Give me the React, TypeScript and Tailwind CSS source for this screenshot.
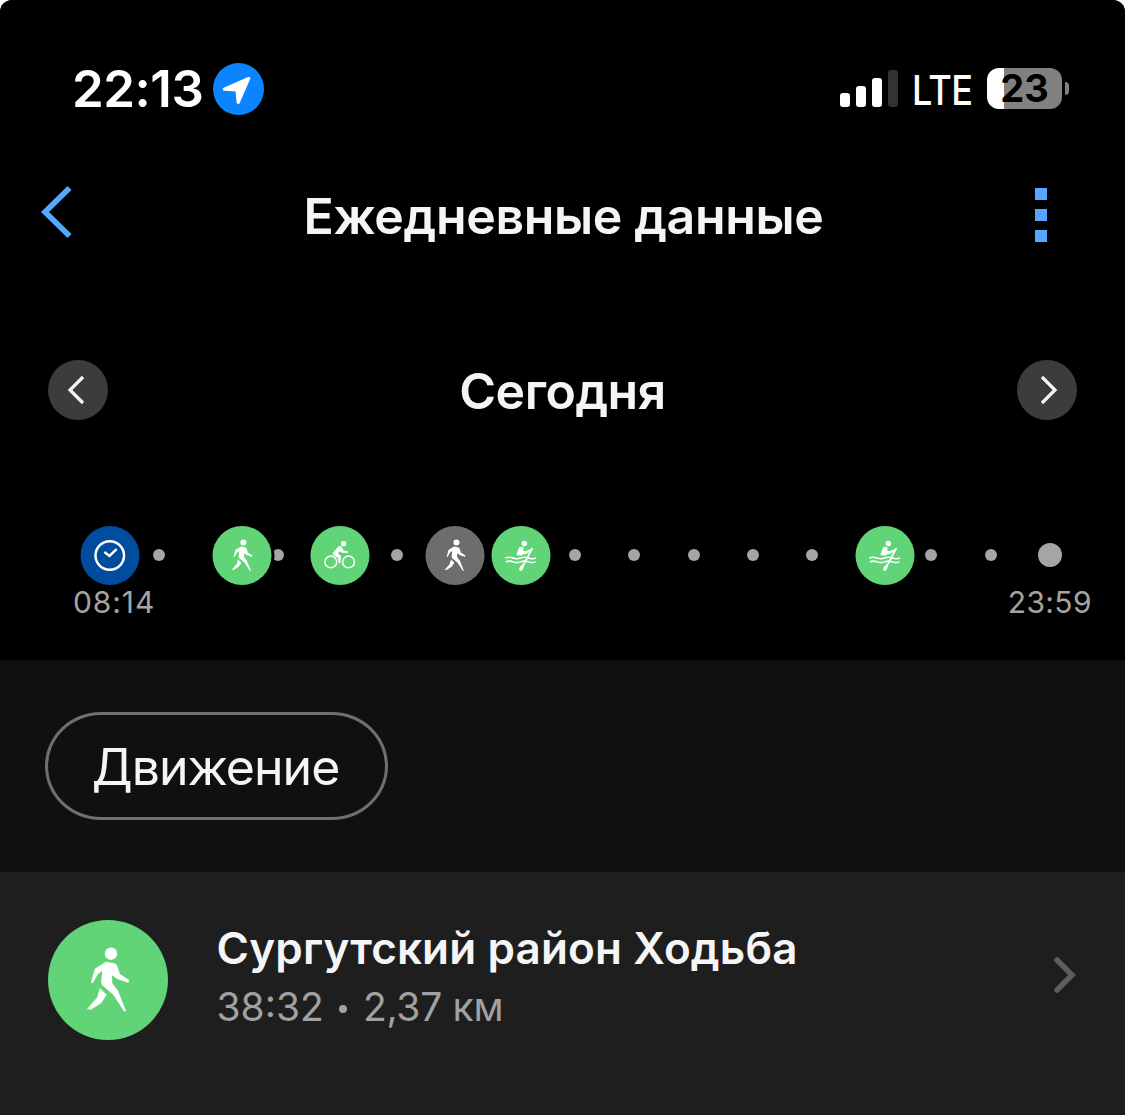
import type { ReactNode } from "react";

type Kind = "sync" | "walk" | "bike" | "row";

const DAY_LABELS = { start: "08:14", end: "23:59" };

// pos is the share of the track that has passed, in percent
const events: { kind: Kind; pos: number; bg: string }[] = [
  { kind: "sync", pos: 1.06, bg: "bg-[#004c9f]" },
  { kind: "walk", pos: 14.94, bg: "bg-[#62d478]" },
  { kind: "bike", pos: 25.34, bg: "bg-[#62d478]" },
  { kind: "walk", pos: 37.44, bg: "bg-[#6d6d6d]" },
  { kind: "row", pos: 44.38, bg: "bg-[#62d478]" },
  { kind: "row", pos: 82.59, bg: "bg-[#62d478]" },
];

const glyphs: Record<Kind, ReactNode> = {
  sync: (
    <g fill="none" stroke="currentColor" strokeWidth="5">
      <circle cx="59.500" cy="60" r="29" />
      <path d="M48.500 53l10.500 8L73.500 47" />
    </g>
  ),
  walk: (
    <g fill="currentColor">
      <circle cx="63" cy="33.700" r="6.200" />
      <path d="M58 41.700L67 43.500Q68.500 44 69 45.500L72 54L81 60Q81.300 62 80 62.700L69.300 59L64 55.300L64.300 63.300L70.300 71.300L78 91L76.300 91.700L65.300 74.700L54.500 65.500Q53 64.500 53.200 62L54.300 50.700L50 54L45 62.700Q43.300 63.300 43 62.300L46.500 50Q46.700 48.700 48 48Z" />
      <path d="M51.700 68L58.700 74.700L53.300 83L42.700 89.700L39 89L49.300 77.300Z" />
    </g>
  ),
  bike: (
    <g fill="currentColor">
      <circle cx="67.300" cy="36" r="5.300" />
      <g fill="none" stroke="currentColor" strokeWidth="3">
        <circle cx="41.300" cy="73" r="12" />
        <circle cx="77.300" cy="73" r="12" />
      </g>
      <path d="M45.500 55L56 42Q59 39.500 63 42L67.500 50L76 51.300V54.700L64.500 54.500L59.500 51.500L55.500 56L60.500 59Q62 60.300 61.800 63L60.700 76H57.300L55.700 65L46.500 58.500Q45 57 45.500 55Z" />
    </g>
  ),
  row: (
    <g fill="currentColor">
      <circle cx="66.700" cy="35.500" r="5.600" />
      <path d="M56 43.500Q60 40.500 65 43.500L64.500 50.500L69.500 51.500L79.500 47L80.500 50.500L70.500 57L64 57.500L62 60L50.500 59.500Z" />
      <path
        d="M82.500 46L64 81"
        fill="none"
        stroke="currentColor"
        strokeWidth="3.600"
        strokeLinecap="round"
      />
      <path d="M66 80Q65.500 88.500 60 91.500Q56 91.500 56 87.500Q57.500 82.500 62.500 78.500Z" />
      <path
        d="M28 65q7.800-3 15.600 0t15.600 0t15.600 0t15.600 0M29 73q7.600-3 15.200 0t15.200 0t15.200 0t15.200 0"
        fill="none"
        stroke="currentColor"
        strokeWidth="3.200"
      />
    </g>
  ),
};

function Glyph({ kind }: { kind: Kind }) {
  return (
    <svg viewBox="0 0 120 120" className="h-full w-full text-white">
      {glyphs[kind]}
    </svg>
  );
}

function StatusBar() {
  return (
    <div className="flex h-[52px] items-center justify-between pr-14 pl-[72px]">
      <div className="flex items-center">
        <span className="w-[141px] text-[51px] leading-[52px] font-semibold tracking-[-0.5px] text-white">
          22:13
        </span>
        <svg viewBox="0 0 51 52" className="h-[52px] w-[51px]">
          <ellipse cx="25.500" cy="26" rx="25.500" ry="26" fill="#0a84ff" />
          <path
            d="M35.700 15.400L11.300 26.200L24 26.900L25.200 39.300Z"
            fill="#fff"
            stroke="#fff"
            strokeWidth="3.200"
            strokeLinejoin="round"
          />
        </svg>
      </div>
      <div className="-mt-0.5 flex items-center">
        <div className="flex h-[37px] items-end gap-1.5">
          <i className="h-3.5 w-2.5 rounded-[3px] bg-white" />
          <i className="h-[21px] w-2.5 rounded-[3px] bg-white" />
          <i className="h-[29px] w-2.5 rounded-[3px] bg-white" />
          <i className="h-[37px] w-2.5 rounded-[3px] bg-[#333]" />
        </div>
        <span className="ml-3.5 w-[75px] origin-left scale-x-88 pt-1 text-[41px] leading-12 font-medium tracking-[-0.8px] text-white">
          LTE
        </span>
        <div className="flex h-[41px] w-[75px] items-center justify-center rounded-xl bg-linear-to-r from-white from-[17px] to-[#818181] to-[17px]">
          <span className="text-[38px] leading-[41px] font-bold text-black">23</span>
        </div>
        <i className="ml-[3px] h-[13px] w-1 rounded-r-full bg-[#818181]" />
      </div>
    </div>
  );
}

function NavBar() {
  return (
    <div className="mt-[69px] flex h-16 items-center pr-[78px] pl-10">
      <svg viewBox="0 0 32 56" className="-mt-2 h-14 w-8" fill="none" stroke="#55a8ff" strokeWidth="5.600">
        <path d="M29.500 4L5 28L29.500 52" />
      </svg>
      <h1 className="ml-5 flex-1 text-center text-[50px] leading-16 font-semibold tracking-[-0.35px] text-[#f5f5f5]">
        Ежедневные данные
      </h1>
      <div className="-mt-0.5 flex flex-col gap-[9px]">
        <i className="size-3 bg-[#55a8ff]" />
        <i className="size-3 bg-[#55a8ff]" />
        <i className="size-3 bg-[#55a8ff]" />
      </div>
    </div>
  );
}

function DayPicker() {
  return (
    <div className="mt-[112px] flex h-[60px] items-center justify-between px-12">
      <button className="size-[60px] rounded-full bg-[#3c3c3c]">
        <svg viewBox="0 0 60 60" className="size-[60px]" fill="none" stroke="#f5f5f5" strokeWidth="3.200">
          <path d="M35 17L22 30L35 43" />
        </svg>
      </button>
      <h2 className="pt-0.5 text-[50px] leading-[60px] font-semibold tracking-[-0.5px] text-[#f5f5f5]">
        Сегодня
      </h2>
      <button className="size-[60px] rounded-full bg-[#3c3c3c]">
        <svg viewBox="0 0 60 60" className="size-[60px]" fill="none" stroke="#f5f5f5" strokeWidth="3.200">
          <path d="M25 17L38 30L25 43" />
        </svg>
      </button>
    </div>
  );
}

function Timeline() {
  return (
    <div className="mt-[105px]">
      <div className="relative mr-[75px] ml-[99.5px] h-[60px]">
        <div className="-mx-1.5 flex h-full items-center justify-between">
          {Array.from({ length: 17 }, (_, i) => (
            <i key={i} className="size-3 rounded-full bg-[#a5a5a5] last:scale-200" />
          ))}
        </div>
        {events.map((e, i) => (
          <div
            key={i}
            className={`absolute top-[1px] size-[59px] -translate-x-1/2 rounded-full ring-3 ring-black ${e.bg}`}
            style={{ left: `${e.pos}%` }}
          >
            <Glyph kind={e.kind} />
          </div>
        ))}
      </div>
      <div className="-mt-px flex justify-between pr-[33px] pl-[73px] text-[30px] leading-9 text-[#a4a4a4]">
        <span className="tracking-[0.9px]">{DAY_LABELS.start}</span>
        <span className="tracking-[0.4px]">{DAY_LABELS.end}</span>
      </div>
    </div>
  );
}

function ActivityRow() {
  return (
    <section className="flex h-[216px] items-center px-12">
      <div className="size-[120px] rounded-full bg-[#62d478]">
        <Glyph kind="walk" />
      </div>
      <div className="-mt-1 ml-[48.5px] flex-1">
        <h3 className="-mt-0.5 text-[44px] leading-[58px] font-semibold tracking-[0.15px] text-[#f5f5f5]">
          Сургутский район Ходьба
        </h3>
        <p className="mt-px flex items-center text-[39px] leading-[58px] text-[#a1a1a1]">
          <span className="w-[122px]">38:32</span>
          <i className="mt-1 size-2 rounded-full bg-[#a1a1a1]" />
          <span className="ml-[16.5px] tracking-[-0.3px]">2,37 км</span>
        </p>
      </div>
      <svg
        viewBox="0 0 24 38"
        className="-mt-2.5 h-[38px] w-6"
        fill="none"
        stroke="#5c5c61"
        strokeWidth="5.600"
        strokeLinecap="round"
      >
        <path d="M4 4L19 19L4 34" />
      </svg>
    </section>
  );
}

export default function App() {
  return (
    <div className="h-[1115px] w-[1125px] overflow-hidden bg-white font-['Inter',sans-serif] whitespace-nowrap">
      <div className="flex h-full flex-col overflow-hidden rounded-t-xl bg-[#1e1e1e]">
        <header className="h-[660px] bg-black pt-[63px]">
          <StatusBar />
          <NavBar />
          <DayPicker />
          <Timeline />
        </header>

        <section className="flex h-[212px] items-center bg-[#101010] pl-[45px]">
          <button className="h-[108px] w-[343px] rounded-[56px/54px] border-3 border-[#6f6f6f] pt-0.5 pr-0.5 text-[50px] tracking-[-1px] text-[#f5f5f5]">
            Движение
          </button>
        </section>

        <ActivityRow />
      </div>
    </div>
  );
}
